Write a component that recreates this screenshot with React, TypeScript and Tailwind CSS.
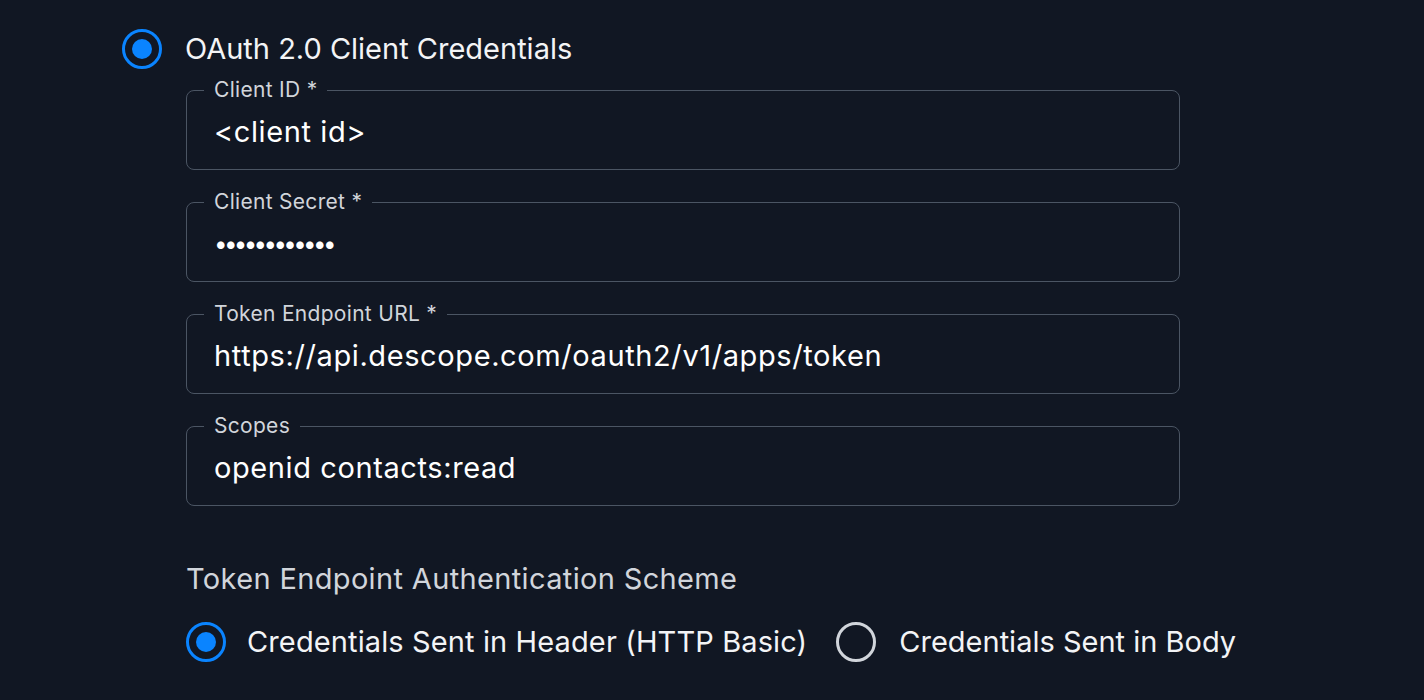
import { useState } from "react"

type Field = { label: string; value: string; secret?: boolean }

const FIELDS: Field[] = [
  { label: "Client ID *", value: "<client id>" },
  { label: "Client Secret *", value: "••••••••••••", secret: true },
  { label: "Token Endpoint URL *", value: "https://api.descope.com/oauth2/v1/apps/token" },
  { label: "Scopes", value: "openid contacts:read" },
]

function Radio({ checked }: { checked: boolean }) {
  return checked ? (
    <div className="flex h-10 w-10 shrink-0 items-center justify-center rounded-full border-[3px] border-[#0a84ff]">
      <div className="h-5 w-5 rounded-full bg-[#0a84ff]" />
    </div>
  ) : (
    <div className="h-10 w-10 shrink-0 rounded-full border-[3px] border-[#d1d5db]" />
  )
}

function OutlinedField({ field }: { field: Field }) {
  return (
    <fieldset className="h-[94px] rounded-lg border border-[#4b5563] pl-[17px] pr-4">
      <legend className="px-2.5 text-[21px] leading-7 tracking-[0.3px] text-[#d1d5db]">{field.label}</legend>
      <div
        className={
          field.secret
            ? "mt-[10px] px-2.5 text-[24px] leading-9 tracking-[-3.6px] text-white"
            : "mt-[10px] px-2.5 text-[29px] leading-9 tracking-[0.6px] text-white"
        }
      >
        {field.value}
      </div>
    </fieldset>
  )
}

export default function App() {
  const [scheme] = useState("header")

  return (
    <div className="h-[700px] w-full bg-[#111723] font-['Inter',sans-serif] text-white">
      <div className="pl-[122px] pt-[29px]">
        <div className="flex items-center gap-[23px]">
          <Radio checked />
          <span className="text-[29px] leading-10 text-[#f3f4f6]">OAuth 2.0 Client Credentials</span>
        </div>

        <div className="ml-[64px] mt-[7px] flex w-[994px] flex-col gap-[18px]">
          {FIELDS.map((f) => (
            <OutlinedField key={f.label} field={f} />
          ))}
        </div>

        <div className="ml-[64px] mt-[55px]">
          <div className="text-[29px] leading-9 tracking-[0.35px] text-[#d1d5db]">
            Token Endpoint Authentication Scheme
          </div>
          <div className="mt-[25px] flex items-center">
            <Radio checked={scheme === "header"} />
            <span className="ml-[21px] text-[29px] leading-9 tracking-[0.12px] text-[#f3f4f6]">
              Credentials Sent in Header (HTTP Basic)
            </span>
            <div className="ml-[29px]">
              <Radio checked={scheme === "body"} />
            </div>
            <span className="ml-[23px] text-[29px] leading-9 text-[#f3f4f6]">Credentials Sent in Body</span>
          </div>
        </div>
      </div>
    </div>
  )
}
